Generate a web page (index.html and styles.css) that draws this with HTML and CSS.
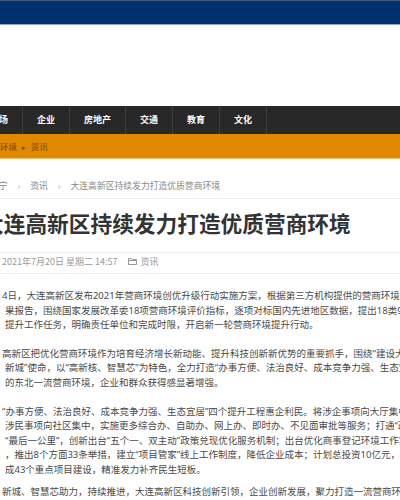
FILE: index.html
```html
<!DOCTYPE html>
<html lang="zh-CN">
<head>
    <meta charset="UTF-8">
    <meta name="viewport" content="width=device-width, initial-scale=1.0">
    <title>大连高新区持续发力打造优质营商环境</title>
    <link rel="stylesheet" href="styles.css">
</head>
<body>
    <div class="topbar"></div>
    <div class="header"></div>

    <div class="nav">
        <a href="#">市场</a>
        <a href="#">企业</a>
        <a href="#">房地产</a>
        <a href="#">交通</a>
        <a href="#">教育</a>
        <a href="#">文化</a>
    </div>

    <div class="subbar">
        <span class="subbar-text">营商环境</span>
        <span class="subbar-arrow">▸</span>
        <span class="subbar-text">资讯</span>
    </div>

    <div class="crumbs">
        <span>辽宁</span>
        <span class="crumb-sep">›</span>
        <span>资讯</span>
        <span class="crumb-sep">›</span>
        <span>大连高新区持续发力打造优质营商环境</span>
    </div>

    <h1 class="title">大连高新区持续发力打造优质营商环境</h1>

    <div class="meta">
        <span>2021年7月20日 星期二 14:57</span>
        <span class="meta-cat">
            <svg width="9" height="8" viewBox="0 0 9 8"><path d="M0.5 1.5 H3.5 L4.5 2.5 H8.5 V7.5 H0.5 Z M0.5 3.5 H8.5" fill="none" stroke="#999" stroke-width="1"/></svg>
            资讯
        </span>
    </div>

    <div class="article">
        <p>4日，大连高新区发布2021年营商环境创优升级行动实施方案，根据第三方机构提供的营商环境评价结<br>果报告，围绕国家发展改革委18项营商环境评价指标，逐项对标国内先进地区数据，提出18类96项<br>提升工作任务，明确责任单位和完成时限，开启新一轮营商环境提升行动。</p>
        <p>高新区把优化营商环境作为培育经济增长新动能、提升科技创新新优势的重要抓手，围绕“建设大连<br>新城”使命，以“高新核、智慧芯”为特色，全力打造“办事方便、法治良好、成本竞争力强、生态宜居”<br>的东北一流营商环境，企业和群众获得感显著增强。</p>
        <p>“办事方便、法治良好、成本竞争力强、生态宜居”四个提升工程惠企利民。将涉企事项向大厅集中，<br>涉民事项向社区集中，实施更多综合办、自助办、网上办、即时办、不见面审批等服务；打通“政务服<br>“最后一公里”，创新出台“五个一、双主动”政策兑现优化服务机制；出台优化商事登记环境工作实施<br>，推出8个方面33条举措，建立“项目管家”线上工作制度，降低企业成本；计划总投资10亿元，分批推<br>成43个重点项目建设，精准发力补齐民生短板。</p>
        <p class="last">新城、智慧芯助力，持续推进，大连高新区科技创新引领，企业创新发展，聚力打造一流营商环境</p>
    </div>
</body>
</html>
```

FILE: styles.css
```css
body {
    margin: 0;
    width: 400px;
    height: 500px;
    overflow: hidden;
    background-color: #fff;
    font-family: "Noto Sans CJK SC", "Noto Sans", sans-serif;
    color: #333;
}
.topbar {
    height: 23px;
    background-color: #00306e;
    border-top: 1px solid #44587e;
    border-bottom: 1px solid #8ea8cc;
}
.header {
    height: 81px;
}
.nav {
    display: flex;
    height: 28px;
    margin-left: -24px;
    background-color: #282828;
    white-space: nowrap;
}
.nav a {
    padding: 0 14px;
    line-height: 28px;
    font-size: 9px;
    font-weight: bold;
    color: #fff;
    text-decoration: none;
    border-right: 1px solid #3d3d3d;
}
.subbar {
    height: 24px;
    margin-left: -17px;
    line-height: 24px;
    font-size: 8.5px;
    background-color: #df8800;
    border-bottom: 1px solid #f0c070;
    white-space: nowrap;
    color: #7d4708;
}
.subbar-arrow {
    font-size: 7px;
    margin: 0 3px;
}
.crumbs {
    margin-left: -10px;
    padding: 20px 0 5px;
    line-height: 14px;
    font-size: 8.8px;
    color: #888;
    white-space: nowrap;
    border-bottom: 1px solid #f0f0f0;
}
.crumb-sep {
    margin: 0 8px;
    color: #aaa;
}
.title {
    margin: 0 0 0 -18px;
    padding: 9px 0 14px;
    line-height: 30px;
    font-size: 21.7px;
    font-weight: bold;
    color: #333;
    white-space: nowrap;
    border-bottom: 1px solid #f0f0f0;
}
.meta {
    padding: 2px 0 4px 2px;
    line-height: 14px;
    font-size: 9px;
    color: #999;
    white-space: nowrap;
    border-bottom: 1px solid #f0f0f0;
}
.meta-cat {
    margin-left: 8px;
}
.meta-cat svg {
    margin-right: 2px;
}
.article {
    padding: 15px 0 0 5px;
    font-family: "Noto Sans", "Noto Sans CJK SC", sans-serif;
}
.article p {
    margin: 0 0 14px;
    text-indent: -3px;
    line-height: 14.6px;
    font-size: 9.5px;
    color: #4a4a4a;
    white-space: nowrap;
}
.article p.last {
    margin-top: -7px;
}
```
